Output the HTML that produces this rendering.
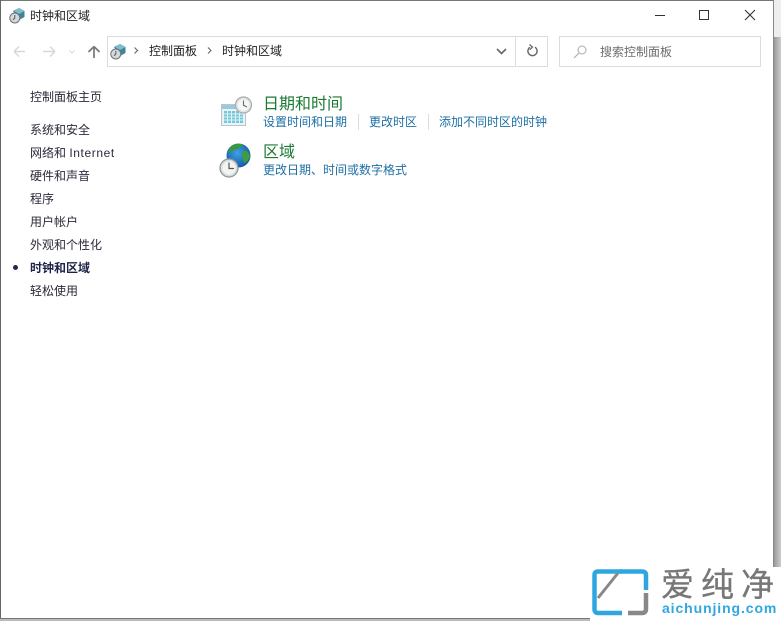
<!DOCTYPE html>
<html lang="zh-CN">
<head>
<meta charset="utf-8">
<style>
html,body{margin:0;padding:0;width:781px;height:621px;overflow:hidden;background:#fff}
body{position:relative;font-family:"Liberation Sans","Noto Sans CJK SC",sans-serif;font-size:12px;color:#222}
.a{position:absolute;white-space:nowrap;line-height:16px}
svg{position:absolute;overflow:visible}
.n{left:30px;color:#2a2a3a;font-size:12px}
.l{color:#1c6fa5;font-size:12px;top:114px}
.h{color:#1a7a32;font-size:16px;line-height:20px}
.s{position:absolute;width:1px;height:16px;top:114px;background:#d5dfe5}
</style>
</head>
<body>
<!-- window edges -->
<div style="position:absolute;left:0;top:0;width:774px;height:1px;background:#777"></div>
<div style="position:absolute;left:0;top:0;width:1px;height:619px;background:#666"></div>
<div style="position:absolute;left:773px;top:0;width:1px;height:619px;background:#888"></div>
<div style="position:absolute;left:774px;top:0;width:7px;height:37px;background:#eee"></div>
<div style="position:absolute;left:774px;top:37px;width:7px;height:530px;background:linear-gradient(90deg,#999,#b8b8b8 60%,#ccc)"></div>
<div style="position:absolute;left:774px;top:567px;width:7px;height:54px;background:#fff"></div>
<div style="position:absolute;left:0;top:618px;width:590px;height:1px;background:#777"></div>
<div style="position:absolute;left:0;top:619px;width:590px;height:2px;background:#bbb"></div>

<!-- title icon -->
<svg style="left:9px;top:7px" width="16" height="17" viewBox="0 0 16 17">
<path d="M4 4 L10 1 L15.500 4 L15.500 10 L10 13 Z" fill="#3f8596"/>
<path d="M10 1 L15.500 4 L10 7 L5 4Z" fill="#7fbdc9"/>
<circle cx="5.800" cy="11" r="5" fill="#d5d9dc" stroke="#6b7379"/>
<path d="M5.800 8V11L4 12.800" fill="none" stroke="#555" stroke-width="1"/>
</svg>
<div class="a" style="left:30px;top:8px;color:#222">时钟和区域</div>

<!-- window buttons -->
<svg style="left:655px;top:9px" width="110" height="14" viewBox="0 0 110 14">
<path d="M0 6.500H10" stroke="#333" stroke-width="1"/>
<rect x="44.500" y="1.500" width="9" height="9" fill="none" stroke="#333"/>
<path d="M90 1L100 11M100 1L90 11" stroke="#333" stroke-width="1.100"/>
</svg>

<!-- nav -->
<svg style="left:13px;top:44px" width="90" height="16" viewBox="0 0 90 16">
<path d="M1 7.500H12M1 7.500L6 2.500M1 7.500L6 12.500" fill="none" stroke="#d4d8dc" stroke-width="1.400"/>
<path d="M42 7.500H30M42 7.500L37 2.500M42 7.500L37 12.500" fill="none" stroke="#d4d8dc" stroke-width="1.400"/>
<path d="M56.500 6.500L59 9L61.500 6.500" fill="none" stroke="#d8d8d8" stroke-width="1.100"/>
<path d="M81 14V2.500M81 2.500L75.500 8M81 2.500L86.500 8" fill="none" stroke="#777" stroke-width="1.700"/>
</svg>

<!-- address bar -->
<div style="position:absolute;left:107px;top:36px;width:439px;height:29px;border:1px solid #dcdcdc"></div>
<div style="position:absolute;left:515px;top:37px;width:1px;height:29px;background:#dcdcdc"></div>
<svg style="left:110px;top:43px" width="16" height="17" viewBox="0 0 16 17">
<path d="M4 4 L10 1 L15.500 4 L15.500 10 L10 13 Z" fill="#3f8596"/>
<path d="M10 1 L15.500 4 L10 7 L5 4Z" fill="#7fbdc9"/>
<circle cx="5.800" cy="11" r="5" fill="#d5d9dc" stroke="#6b7379"/>
<path d="M5.800 8V11L4 12.800" fill="none" stroke="#555" stroke-width="1"/>
</svg>
<svg style="left:133px;top:46px" width="80" height="10" viewBox="0 0 80 10">
<path d="M1.500 1.500L4.500 4.500L1.500 7.500" fill="none" stroke="#666" stroke-width="1.100"/>
<path d="M75 1.500L78 4.500L75 7.500" fill="none" stroke="#666" stroke-width="1.100"/>
</svg>
<div class="a" style="left:149px;top:43px;color:#222">控制面板</div>
<div class="a" style="left:222px;top:43px;color:#222">时钟和区域</div>
<svg style="left:496px;top:47px" width="12" height="9" viewBox="0 0 12 9">
<path d="M1 2L5.500 6.500L10 2" fill="none" stroke="#666" stroke-width="1.600"/>
</svg>
<svg style="left:526px;top:44px" width="13" height="14" viewBox="0 0 13 14">
<path d="M4 3.200A4.600 4.600 0 1 0 9 3.200" fill="none" stroke="#666" stroke-width="1.400"/>
<path d="M3.500 0.500L6.500 3L3.800 5.800" fill="none" stroke="#666" stroke-width="1.200"/>
</svg>

<!-- search -->
<div style="position:absolute;left:559px;top:36px;width:200px;height:29px;border:1px solid #dcdcdc"></div>
<svg style="left:573px;top:45px" width="14" height="14" viewBox="0 0 14 14">
<circle cx="9" cy="5" r="4" fill="none" stroke="#aaa"/>
<path d="M6 8L1 13" stroke="#aaa" stroke-width="1.100"/>
</svg>
<div class="a" style="left:600px;top:44px;color:#6d6d6d">搜索控制面板</div>

<!-- left nav -->
<div class="a n" style="top:89px">控制面板主页</div>
<div class="a n" style="top:122px">系统和安全</div>
<div class="a n" style="top:145px">网络和 <span style="letter-spacing:.6px">Internet</span></div>
<div class="a n" style="top:168px">硬件和声音</div>
<div class="a n" style="top:191px">程序</div>
<div class="a n" style="top:214px">用户帐户</div>
<div class="a n" style="top:237px">外观和个性化</div>
<div style="position:absolute;left:13px;top:265px;width:5px;height:5px;border-radius:50%;background:#27294a"></div>
<div class="a n" style="top:260px;font-weight:bold;color:#1d2348">时钟和区域</div>
<div class="a n" style="top:283px">轻松使用</div>

<!-- calendar icon -->
<svg style="left:220px;top:96px" width="32" height="33" viewBox="0 0 32 33">
<rect x="1.500" y="8.500" width="24" height="21" fill="#eaf4f7" stroke="#b4c6ce"/>
<rect x="2" y="9" width="23" height="4" fill="#9cc9da"/>
<rect x="4" y="15" width="19" height="12" fill="#74c6d8"/>
<path d="M7.500 15V27M11.500 15V27M15.500 15V27M19.500 15V27M4 18H23M4 21H23M4 24H23" stroke="#e2f3f7" stroke-width="1"/>
<circle cx="23.500" cy="9" r="8" fill="#e2e4e4" stroke="#a5acaf" stroke-width="1.200"/>
<circle cx="23.500" cy="9" r="5.800" fill="#f6f6f4"/>
<path d="M23.500 4.500V9.300L27 11" fill="none" stroke="#666e72" stroke-width="1.100"/>
</svg>
<div class="a h" style="left:263px;top:95px">日期和时间</div>
<div class="a l" style="left:263px">设置时间和日期</div>
<div class="s" style="left:358px"></div>
<div class="a l" style="left:369px">更改时区</div>
<div class="s" style="left:428px"></div>
<div class="a l" style="left:439px">添加不同时区的时钟</div>

<!-- globe icon -->
<svg style="left:219px;top:143px" width="34" height="37" viewBox="0 0 34 37">
<defs><radialGradient id="g" cx=".45" cy=".4" r=".7"><stop offset="0" stop-color="#3fa2e4"/><stop offset="1" stop-color="#0c4f9e"/></radialGradient></defs>
<circle cx="19.500" cy="12.500" r="12" fill="url(#g)"/>
<path d="M10.500 5C14 1 19 0 24 1.500C23 4 20 5 17.500 6C15 7 12 9 9.500 10Z" fill="#3a9a38"/>
<path d="M24 8C27 7 30 9 31 13C30 17 27 20 25 20C24 16 22 12 24 8Z" fill="#3f9d3c"/>
<circle cx="10" cy="25" r="9" fill="#d8dbdc" stroke="#8d9599" stroke-width="1.200"/>
<circle cx="10" cy="25" r="6.800" fill="#f4f4f2"/>
<path d="M10 19.500V25.500H15" fill="none" stroke="#50585c" stroke-width="1.200"/>
</svg>
<div class="a h" style="left:263px;top:143px">区域</div>
<div class="a l" style="left:263px;top:162px">更改日期、时间或数字格式</div>

<!-- watermark -->
<div style="position:absolute;left:590px;top:567px;width:191px;height:54px;background:#fff"></div>
<svg style="left:592px;top:569px" width="58" height="48" viewBox="0 0 58 48">
<path d="M30 2.500H6Q2.500 2.500 2.500 6V40Q2.500 44 6 44H30" fill="none" stroke="#2ea7e0" stroke-width="4.500"/>
<path d="M28 2.500H50Q54 2.500 54 6V21" fill="none" stroke="#2ea7e0" stroke-width="4.500"/>
<path d="M54 24V40Q54 44 50 44H36" fill="none" stroke="#888" stroke-width="4.500"/>
<path d="M6 29L26 4" stroke="#888" stroke-width="3"/>
</svg>
<div class="a" style="left:661px;top:567px;font-size:33px;line-height:36px;color:#777;letter-spacing:7px;-webkit-text-stroke:.3px #777">爱纯净</div>
<div class="a" style="left:662px;top:600px;font-size:14px;line-height:16px;font-weight:bold;color:#2ea7e0;letter-spacing:.9px">aichunjing.com</div>
</body>
</html>
